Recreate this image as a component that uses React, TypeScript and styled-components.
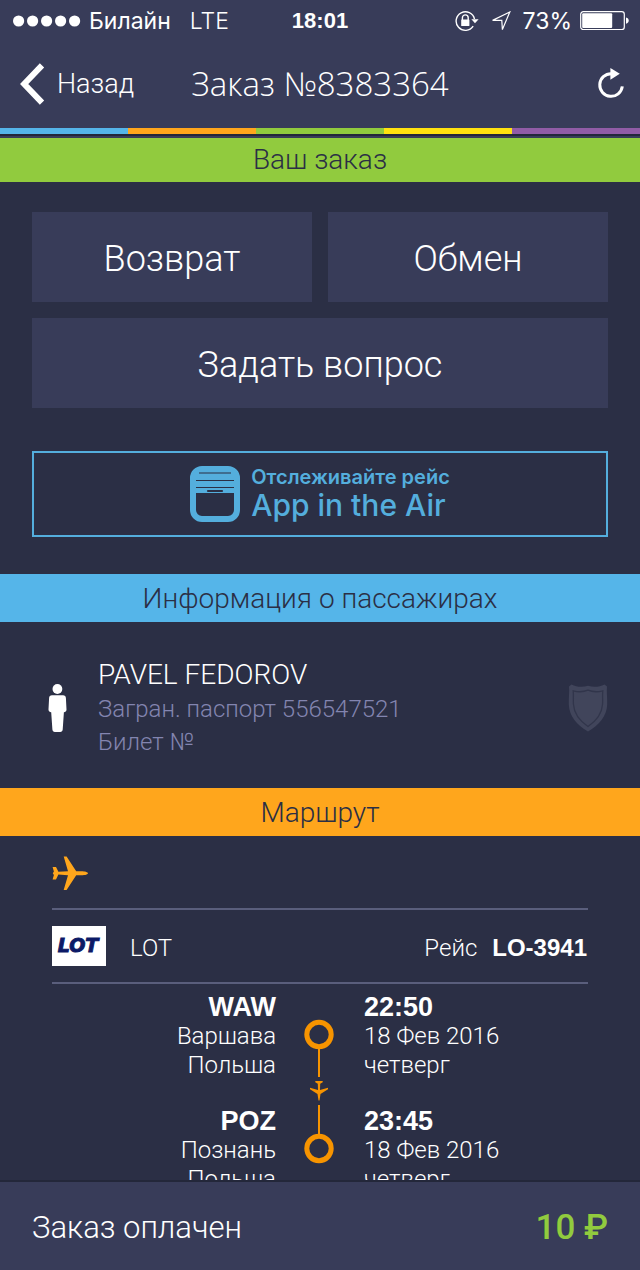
import React from 'react';
import styled, { createGlobalStyle } from 'styled-components';

const color = {
  bar: '#383c59',
  page: '#2b2f45',
  shadow: '#23273a',
  tile: '#383c59',
  rule: '#5a5e7c',
  muted: '#8385b0',
  blue: '#55b5e9',
  sky: '#54aedd',
  orange: '#ffa61c',
  route: '#f79400',
  green: '#91cb3e',
  yellow: '#ffe20f',
  purple: '#915ca6',
  shield: '#41455b',
};

const boldFont = '"Liberation Sans", Arial, sans-serif';

const GlobalStyle = createGlobalStyle`
  * { box-sizing: border-box; }
  body {
    margin: 0;
    background: ${color.page};
    color: #fff;
    font-family: Roboto, "Liberation Sans", sans-serif;
    font-weight: 300;
  }
  h1, h2, h3, p { margin: 0; font-weight: 300; }
  button { font: inherit; color: inherit; border: 0; padding: 0; cursor: pointer; }
  svg { display: block; flex: none; }
`;

const Screen = styled.div`
  display: flex;
  flex-direction: column;
  height: 100vh;
`;

const Header = styled.header`
  flex: none;
  background: ${color.bar};
`;

const StatusBar = styled.div`
  display: grid;
  grid-template-columns: 1fr auto 1fr;
  align-items: center;
  height: 40px;
  padding: 1px 11px 0 11px;
  font-family: Inter, sans-serif;
  font-size: 23px;
  font-weight: 400;
`;

const StatusGroup = styled.div<{ $end?: boolean; $gap: number }>`
  display: flex;
  align-items: center;
  justify-content: ${(p) => (p.$end ? 'flex-end' : 'flex-start')};
  gap: ${(p) => p.$gap}px;
`;

const Signal = styled.span`
  margin-left: 2px;
`;

const Network = styled.span`
  margin-left: 11px;
  font-weight: 300;
`;

const Clock = styled.time`
  font-family: ${boldFont};
  font-weight: 700;
  font-size: 22px;
`;

const NavBar = styled.nav`
  display: grid;
  grid-template-columns: 1fr auto 1fr;
  align-items: center;
  height: 88px;
  padding: 0 14px;
`;

const BackButton = styled.button`
  display: flex;
  align-items: center;
  gap: 12px;
  justify-self: start;
  margin-left: 6px;
  background: none;
  font-size: 27px;
`;

const IconButton = styled.button`
  justify-self: end;
  background: none;
`;

const Title = styled.h1`
  font-family: "Open Sans", sans-serif;
  font-size: 33px;
  line-height: 40px;
`;

const Stripes = styled.div`
  display: flex;
  border-bottom: 2px solid ${color.shadow};
`;

const Stripe = styled.span<{ $color: string }>`
  flex: 1;
  height: 6px;
  background: ${(p) => p.$color};
`;

const Content = styled.main`
  flex: 1;
  min-height: 0;
  border-top: 2px solid ${color.bar};
  overflow-y: auto;
  scrollbar-width: none;
`;

const SectionTitle = styled.h2<{ $color: string; $compact?: boolean }>`
  height: ${(p) => (p.$compact ? 44 : 48)}px;
  background: ${(p) => p.$color};
  color: ${color.page};
  font-size: 28px;
  line-height: ${(p) => (p.$compact ? 44 : 50)}px;
  text-align: center;
`;

const Actions = styled.div`
  display: grid;
  grid-template-columns: 1fr 1fr;
  gap: 16px;
  padding: 30px 32px 43px;
`;

const ActionButton = styled.button<{ $wide?: boolean }>`
  grid-column: ${(p) => (p.$wide ? '1 / -1' : 'auto')};
  height: 90px;
  padding-top: 4px;
  background: ${color.tile};
  font-size: 36px;
`;

const TrackLink = styled.a`
  display: flex;
  align-items: center;
  justify-content: center;
  gap: 11px;
  height: 86px;
  margin: 0 32px 37px;
  border: 2px solid ${color.sky};
  color: ${color.sky};
  font-family: Inter, sans-serif;
  text-decoration: none;
`;

const TrackText = styled.span`
  display: flex;
  flex-direction: column;
`;

const TrackHint = styled.span`
  font-size: 20px;
  font-weight: 600;
  line-height: 22px;
`;

const TrackName = styled.span`
  font-size: 30px;
  font-weight: 500;
  line-height: 34px;
`;

const Passenger = styled.section`
  display: flex;
  align-items: center;
  padding: 34px 32px 29px 48px;
`;

const PassengerText = styled.div`
  flex: 1;
  margin-left: 31px;
`;

const PassengerName = styled.h3`
  font-size: 28px;
  line-height: 37px;
`;

const Document = styled.p`
  color: ${color.muted};
  font-size: 24px;
  line-height: 33px;
`;

const Trip = styled.section`
  padding: 20px 52px 0;
`;

const Carrier = styled.div`
  display: flex;
  align-items: center;
  margin-top: 18px;
  height: 76px;
  border-top: 2px solid ${color.rule};
  border-bottom: 2px solid ${color.rule};
  font-size: 24px;
`;

const CarrierInfo = styled.p`
  display: flex;
  flex: 1;
  align-items: baseline;
  padding-top: 3px;
`;

const CarrierName = styled.span`
  flex: 1;
  margin-left: 24px;
`;

const FlightNumber = styled.b`
  margin: 0 1px 0 15px;
  font-family: ${boldFont};
  font-weight: 700;
`;

const Route = styled.div`
  display: grid;
  grid-template-columns: 1fr 88px 1fr;
`;

const StopList = styled.div<{ $end?: boolean }>`
  display: flex;
  flex-direction: column;
  gap: 27px;
  padding-top: 9px;
  text-align: ${(p) => (p.$end ? 'right' : 'left')};
`;

const Stop = styled.p`
  font-size: 24px;
  line-height: 29px;
`;

const StopHead = styled.b`
  display: block;
  font-family: ${boldFont};
  font-size: 27px;
  font-weight: 700;
`;

const Footer = styled.footer`
  display: flex;
  flex: none;
  align-items: center;
  justify-content: space-between;
  height: 90px;
  padding: 2px 32px 0;
  border-top: 2px solid ${color.shadow};
  background: ${color.bar};
  font-size: 31px;
`;

const Price = styled.strong`
  color: ${color.green};
  font-size: 35px;
  font-weight: 500;
`;

const SignalIcon = () => (
  <svg width="68" height="12" fill="#fff" aria-hidden="true">
    {[0, 1, 2, 3, 4].map((i) => (
      <circle key={i} cx={5.6 + i * 14} cy="6" r="5.6" />
    ))}
  </svg>
);

const RotationLockIcon = () => (
  <svg width="24" height="22" viewBox="0 0 24 22" fill="none" stroke="#fff" aria-hidden="true">
    <path d="M18.200 16.200A9.300 9.300 0 1 1 19.500 9" strokeWidth="1.4" />
    <path d="M16.400 9.200h7.200L20 13.200z" fill="#fff" stroke="none" />
    <path d="M7.400 10V7.800a2.900 2.900 0 0 1 5.800 0V10" strokeWidth="1.400" />
    <rect x="6.200" y="9.400" width="8.200" height="6.600" rx="0.600" fill="#fff" stroke="none" />
  </svg>
);

const LocationIcon = () => (
  <svg width="20" height="20" viewBox="0 0 20 20" fill="none" stroke="#fff" strokeWidth="1.2" aria-hidden="true">
    <path d="M1.600 9.400 18.800 1 11.400 18.600 10.800 9.400z" />
  </svg>
);

const BatteryIcon = () => (
  <svg width="49" height="20" viewBox="0 0 49 20" fill="#fff" aria-hidden="true">
    <rect x="0.7" y="0.7" width="43.6" height="17.8" rx="2.6" fill="none" stroke="#fff" strokeWidth="1.2" />
    <rect x="2.2" y="2.2" width="30" height="14.8" rx="1" />
    <path d="M46 6.400c1.800.4 2.700 1.500 2.700 3.200s-.9 2.800-2.700 3.200z" />
  </svg>
);

const BackIcon = () => (
  <svg width="25" height="42" viewBox="0 0 25 42" fill="none" stroke="#fff" strokeWidth="6" aria-hidden="true">
    <path d="M22 2.400 4.200 21 22 39.600" />
  </svg>
);

const RefreshIcon = () => (
  <svg width="29" height="34" viewBox="0 0 29 34" fill="none" aria-hidden="true">
    <path d="M14.300 6.700A11.300 11.300 0 1 0 25.300 19.400" stroke="#fff" strokeWidth="3" />
    <path d="M13.400 1 22.800 6.800 13.400 12.800z" fill="#fff" />
  </svg>
);

const WindowIcon = () => (
  <svg width="50" height="56" viewBox="0 0 50 56" fill="none" aria-hidden="true">
    <rect x="3" y="3" width="44" height="50" rx="9" stroke={color.sky} strokeWidth="6" />
    <path d="M3 27V11a8 8 0 0 1 8-8h28a8 8 0 0 1 8 8v16z" fill={color.sky} />
    <path d="M9 7h32M6 14.500h38M6 21.500h38" stroke={color.page} strokeWidth="1.200" />
    <path d="M18 25h14" stroke={color.page} strokeWidth="2.200" strokeLinecap="round" />
  </svg>
);

const PersonIcon = () => (
  <svg width="19" height="48" viewBox="0 0 19 48" fill="#fff" aria-hidden="true">
    <circle cx="9.400" cy="5" r="4.900" />
    <path d="M4 11.300h11c1.800 0 2.800 1 2.900 2.800l.6 11.500c.1 1.500-.8 2.500-2.600 2.700l-1.200 17.200c-.1 1.500-1 2.400-2.500 2.400H6.900c-1.500 0-2.400-.9-2.500-2.400L3.200 28.300C1.400 28.100.4 27.100.5 25.600l.6-11.500c.1-1.800 1.100-2.800 2.900-2.800z" />
  </svg>
);

const ShieldIcon = () => (
  <svg width="40" height="48" viewBox="0 0 40 48" aria-hidden="true">
    <path d="M3.500.5c5 2.700 11.500 3 16.500 1.200 5 1.800 11.500 1.500 16.500-1.200L39 2.500c-.6 5 .4 11 .2 18C38.800 32 31 41 20 47.500 9 41 1.200 32 .8 20.500c-.2-7 .8-13 .2-18z" fill={color.shield} />
    <path d="M5.200 6.800c4.800 1.300 10.300 1.200 14.800-.6 4.500 1.800 10 1.900 14.800.6-.4 4 0 8.500-.2 13.200C34 29.500 28.500 36.800 20 42.500 11.500 36.800 6 29.500 5.400 20c-.2-4.700.2-9.200-.2-13.200z" fill={color.shield} stroke={color.page} strokeOpacity="0.700" strokeWidth="1.300" />
  </svg>
);

const PLANE = 'M36 17.200c0 1-2.600 2-6.800 2h-5L14.600 34h-2.900l4.300-14.800-9.600-.6L4 23.500H.6l1.300-4.600L.8 17.200l1.100-1.700L.6 11H4l2.400 4.800 9.600-.6L11.700.4h2.900l9.600 14.800h5c4.200 0 6.800 1 6.800 2z';

const PlaneIcon = () => (
  <svg width="36" height="34" viewBox="0 0 36 34" fill={color.orange} role="img" aria-label="Перелёт">
    <path d={PLANE} />
  </svg>
);

const LotLogo = () => (
  <svg width="54" height="40" viewBox="0 0 54 40" role="img" aria-label="LOT">
    <rect width="54" height="40" fill="#fff" />
    <text x="26" y="26" textAnchor="middle" fontFamily="DejaVu Sans, sans-serif" fontSize="19" fontWeight="700" fontStyle="italic" fill="#0c1a66" stroke="#0c1a66">LOT</text>
  </svg>
);

const RouteLine = () => (
  <svg width="88" height="184" viewBox="0 0 88 184" fill="none" stroke={color.route} aria-hidden="true">
    <circle cx="43" cy="50.500" r="12.200" strokeWidth="5" />
    <path d="M43 65v28M43 121v29" strokeWidth="2" />
    <circle cx="43" cy="164.500" r="12.200" strokeWidth="5" />
    <path d="M39.300 97h7.400v1.200l-2.500 1.500-.2 6.300 8-2.200v1.500l-7.500 4.700-1 6.500h-1l-1-6.500-7.500-4.700v-1.500l8 2.200-.2-6.300-2.500-1.500z" fill={color.route} stroke="none" />
  </svg>
);

const places = [
  { code: 'WAW', city: 'Варшава', country: 'Польша' },
  { code: 'POZ', city: 'Познань', country: 'Польша' },
];

const times = [
  { time: '22:50', date: '18 Фев 2016', day: 'четверг' },
  { time: '23:45', date: '18 Фев 2016', day: 'четверг' },
];

export default function App() {
  return (
    <Screen>
      <GlobalStyle />
      <Header>
        <StatusBar>
          <StatusGroup $gap={8}>
            <Signal>
              <SignalIcon />
            </Signal>
            <span>Билайн</span>
            <Network>LTE</Network>
          </StatusGroup>
          <Clock>18:01</Clock>
          <StatusGroup $gap={12} $end>
            <RotationLockIcon />
            <LocationIcon />
            <StatusGroup $gap={8}>
              <span>73%</span>
              <BatteryIcon />
            </StatusGroup>
          </StatusGroup>
        </StatusBar>
        <NavBar>
          <BackButton type="button">
            <BackIcon />
            Назад
          </BackButton>
          <Title>Заказ №8383364</Title>
          <IconButton type="button" aria-label="Обновить">
            <RefreshIcon />
          </IconButton>
        </NavBar>
        <Stripes>
          {[color.blue, color.orange, color.green, color.yellow, color.purple].map((c) => (
            <Stripe key={c} $color={c} />
          ))}
        </Stripes>
      </Header>

      <Content>
        <SectionTitle $color={color.green} $compact>Ваш заказ</SectionTitle>
        <Actions>
          <ActionButton type="button">Возврат</ActionButton>
          <ActionButton type="button">Обмен</ActionButton>
          <ActionButton type="button" $wide>Задать вопрос</ActionButton>
        </Actions>
        <TrackLink href="#track">
          <WindowIcon />
          <TrackText>
            <TrackHint>Отслеживайте рейс</TrackHint>
            <TrackName>App in the Air</TrackName>
          </TrackText>
        </TrackLink>

        <SectionTitle $color={color.blue}>Информация о пассажирах</SectionTitle>
        <Passenger>
          <PersonIcon />
          <PassengerText>
            <PassengerName>PAVEL FEDOROV</PassengerName>
            <Document>Загран. паспорт 556547521</Document>
            <Document>Билет №</Document>
          </PassengerText>
          <ShieldIcon />
        </Passenger>

        <SectionTitle $color={color.orange}>Маршрут</SectionTitle>
        <Trip>
          <PlaneIcon />
          <Carrier>
            <LotLogo />
            <CarrierInfo>
              <CarrierName>LOT</CarrierName>
              <span>Рейс</span>
              <FlightNumber>LO-3941</FlightNumber>
            </CarrierInfo>
          </Carrier>
          <Route>
            <StopList $end>
              {places.map((p) => (
                <Stop key={p.code}>
                  <StopHead>{p.code}</StopHead>
                  {p.city}
                  <br />
                  {p.country}
                </Stop>
              ))}
            </StopList>
            <RouteLine />
            <StopList>
              {times.map((t) => (
                <Stop key={t.time}>
                  <StopHead>{t.time}</StopHead>
                  {t.date}
                  <br />
                  {t.day}
                </Stop>
              ))}
            </StopList>
          </Route>
        </Trip>
      </Content>

      <Footer>
        <span>Заказ оплачен</span>
        <Price>10 ₽</Price>
      </Footer>
    </Screen>
  );
}
